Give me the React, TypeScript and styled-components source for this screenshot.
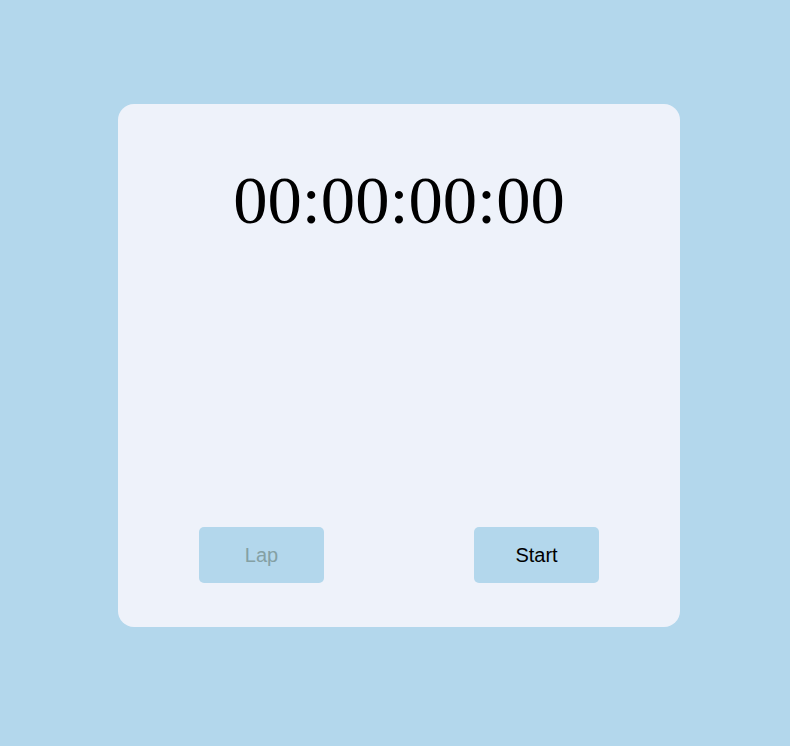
import React from "react";
import styled, { createGlobalStyle } from "styled-components";

const Global = createGlobalStyle`
  html, body { background: #b3d7ec; }
  body { margin: 8px; font-family: "Liberation Serif", "Times New Roman", serif; }
`;

const Page = styled.div`
  display: flex;
  justify-content: center;
  padding: 96px 0 0 8px;
`;

const Card = styled.div`
  width: 562px;
  height: 523px;
  box-sizing: border-box;
  background: #eef2fa;
  border-radius: 16px;
  display: flex;
  flex-direction: column;
  align-items: stretch;
  padding: 62px 81px 44px;
`;

const Display = styled.div`
  font-family: "Liberation Serif", "Times New Roman", serif;
  font-size: 68.6px;
  line-height: 68px;
  color: #000;
  text-align: center;
  flex: 1;
`;

const Controls = styled.div`
  display: flex;
  justify-content: space-between;
`;

const Button = styled.button`
  width: 125px;
  height: 56px;
  border: none;
  border-radius: 5px;
  background: #b3d7ec;
  font-family: "Liberation Sans", Arial, sans-serif;
  font-size: 20px;
  color: #000;
  cursor: pointer;
  &:disabled {
    color: #84a0a4;
    cursor: default;
  }
`;

export default function App() {
  return (
    <>
      <Global />
      <Page>
        <Card>
          <Display>00:00:00:00</Display>
          <Controls>
            <Button disabled>Lap</Button>
            <Button>Start</Button>
          </Controls>
        </Card>
      </Page>
    </>
  );
}
